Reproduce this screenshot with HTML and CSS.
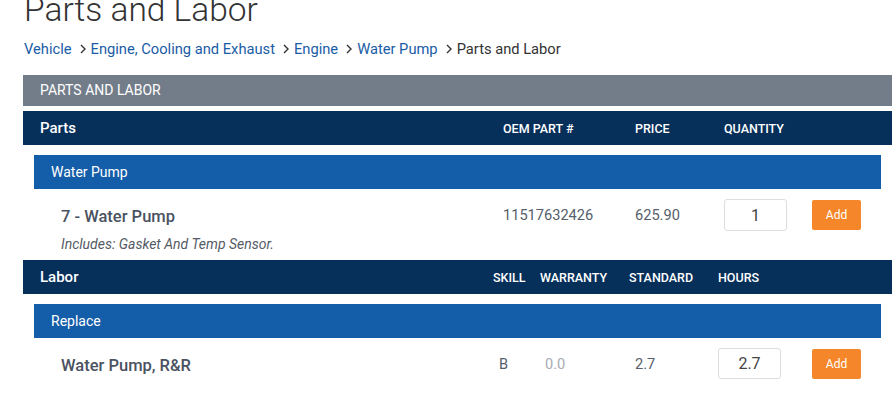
FILE: index.html
```html
<!DOCTYPE html>
<html lang="en">

<head>
    <meta charset="UTF-8">
    <title>Parts and Labor</title>
    <link rel="stylesheet" href="styles.css">
</head>

<body>
    <div class="page">
        <h1 class="page-title">Parts and Labor</h1>

        <!-- breadcrumb -->
        <nav class="crumbs">
            <a href="#">Vehicle</a>
            <svg class="chev" viewBox="0 0 6 10"><path d="M1 1l4 4-4 4" /></svg>
            <a href="#">Engine, Cooling and Exhaust</a>
            <svg class="chev" viewBox="0 0 6 10"><path d="M1 1l4 4-4 4" /></svg>
            <a href="#">Engine</a>
            <svg class="chev" viewBox="0 0 6 10"><path d="M1 1l4 4-4 4" /></svg>
            <a href="#">Water Pump</a>
            <svg class="chev" viewBox="0 0 6 10"><path d="M1 1l4 4-4 4" /></svg>
            <span>Parts and Labor</span>
        </nav>

        <div class="section-bar">PARTS AND LABOR</div>

        <!-- parts -->
        <div class="head-bar parts-grid">
            <div class="head-name">Parts</div>
            <div class="col-label">OEM PART #</div>
            <div class="col-label">PRICE</div>
            <div class="col-label">QUANTITY</div>
            <div></div>
        </div>
        <div class="group-bar">Water Pump</div>
        <div class="item parts-grid">
            <div class="item-name">
                <div class="item-title">7 - Water Pump</div>
                <div class="item-note">Includes: Gasket And Temp Sensor.</div>
            </div>
            <div class="val">11517632426</div>
            <div class="val">625.90</div>
            <div><input class="qty" type="text" value="1"></div>
            <div><button class="add">Add</button></div>
        </div>

        <!-- labor -->
        <div class="head-bar labor-grid">
            <div class="head-name">Labor</div>
            <div class="col-label">SKILL</div>
            <div class="col-label">WARRANTY</div>
            <div class="col-label">STANDARD</div>
            <div class="col-label">HOURS</div>
            <div></div>
        </div>
        <div class="group-bar">Replace</div>
        <div class="item labor-item labor-grid">
            <div class="item-name">
                <div class="item-title">Water Pump, R&amp;R</div>
            </div>
            <div class="val skill">B</div>
            <div class="val muted">0.0</div>
            <div class="val std">2.7</div>
            <div><input class="qty" type="text" value="2.7"></div>
            <div><button class="add">Add</button></div>
        </div>
    </div>
</body>

</html>
```

FILE: styles.css
```css
body {
    font-family: Roboto, "Liberation Sans", Arial, sans-serif;
    background-color: #fff;
    margin: 0;
    padding: 0;
    color: #333;
}

.page {
    margin-left: 23px;
    width: 869px;
}

.page-title {
    font-size: 33.5px;
    font-weight: 300;
    line-height: 40px;
    margin: -10px 0 0 1px;
    color: #333;
}

.crumbs {
    display: flex;
    align-items: center;
    font-size: 14.7px;
    height: 20px;
    margin: 9px 0 0 1px;
}

.crumbs a {
    color: #1a5ca6;
    text-decoration: none;
}

.crumbs span {
    color: #333;
}

.chev {
    width: 6px;
    height: 10px;
    margin: 0 5px 0 8px;
    fill: none;
    stroke: #333;
    stroke-width: 1.4;
}

.section-bar {
    background-color: #737d8a;
    color: #fff;
    font-size: 14px;
    height: 31px;
    line-height: 30px;
    padding-left: 17px;
    margin-top: 16px;
}

.head-bar {
    background-color: #062f5a;
    color: #fff;
    height: 34px;
    align-items: center;
    margin-top: 5px;
}

.head-name {
    padding-left: 17px;
    font-size: 15px;
    font-weight: 500;
}

.col-label {
    font-size: 12.5px;
    font-weight: 500;
}

.parts-grid {
    display: grid;
    grid-template-columns: 480px 132px 89px 88px 1fr;
}

.labor-grid {
    display: grid;
    grid-template-columns: 470px 47px 89px 89px 94px 1fr;
}

.group-bar {
    background-color: #145da8;
    color: #fff;
    font-size: 14px;
    height: 34px;
    line-height: 34px;
    margin: 10px 11px 0 11px;
    padding-left: 17px;
}

.item {
    height: 66px;
    align-items: start;
}

.labor-item {
    height: 66px;
}

.item-name {
    padding-left: 38px;
    padding-top: 18px;
}

.item-title {
    font-size: 16.5px;
    font-weight: 500;
    color: #4a5261;
}

.item-note {
    font-size: 14px;
    font-style: italic;
    color: #555b66;
    margin-top: 10px;
}

.val {
    font-size: 14.6px;
    color: #555e6b;
    padding-top: 17px;
}

.skill {
    padding-left: 6px;
}

.muted {
    color: #a7abb2;
    padding-left: 5px;
}

.std {
    padding-left: 6px;
}

.qty {
    box-sizing: border-box;
    width: 63px;
    height: 32px;
    margin-top: 10px;
    border: 1px solid #ddd;
    border-radius: 3px;
    text-align: center;
    font-family: Roboto, "Liberation Sans", Arial, sans-serif;
    font-size: 16px;
    color: #444;
    padding: 0;
}

.labor-item .qty {
    height: 31px;
}

.add {
    background-color: #f5862a;
    color: #fff;
    font-family: Roboto, "Liberation Sans", Arial, sans-serif;
    font-size: 12px;
    width: 49px;
    height: 30px;
    margin-top: 11px;
    border: none;
    border-radius: 2px;
    padding: 0;
}
```
